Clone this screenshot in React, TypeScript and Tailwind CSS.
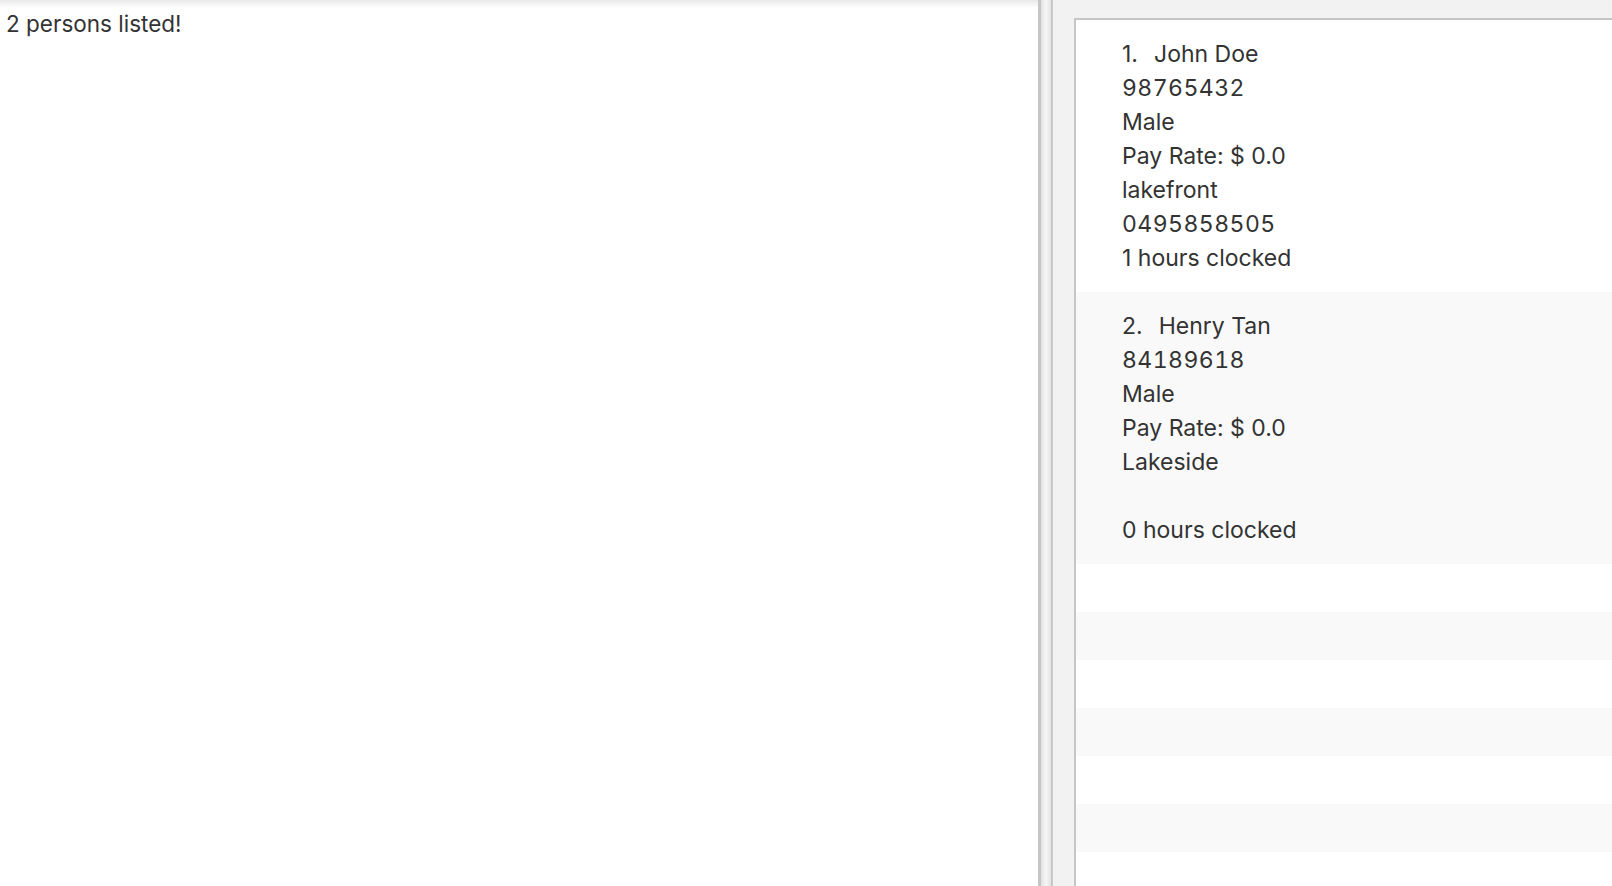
import React from "react";

type Person = {
  name: string;
  phone: string;
  gender: string;
  pay: string;
  address: string;
  extra: string;
  hours: string;
};

const people: Person[] = [
  {
    name: "John Doe",
    phone: "98765432",
    gender: "Male",
    pay: "Pay Rate: $ 0.0",
    address: "lakefront",
    extra: "0495858505",
    hours: "1 hours clocked",
  },
  {
    name: "Henry Tan",
    phone: "84189618",
    gender: "Male",
    pay: "Pay Rate: $ 0.0",
    address: "Lakeside",
    extra: "",
    hours: "0 hours clocked",
  },
];

function Card({ p, i }: { p: Person; i: number }) {
  return (
    <div
      className={`h-[272px] py-[17px] pl-[46px] text-[23px] leading-[34px] text-[#333333] ${
        i % 2 === 0 ? "bg-white" : "bg-[#f9f9f9]"
      }`}
    >
      <div className="flex gap-[16px]">
        <span>{i + 1}.</span>
        <span>{p.name}</span>
      </div>
      <div className="tabular-nums tracking-[0.45px]">{p.phone}</div>
      <div>{p.gender}</div>
      <div>{p.pay}</div>
      <div>{p.address}</div>
      <div className="h-[34px] tabular-nums tracking-[0.45px]">{p.extra}</div>
      <div>{p.hours}</div>
    </div>
  );
}

export default function App() {
  const empties = [0, 1, 2, 3, 4, 5, 6];
  return (
    <div
      className="flex h-[886px] w-[1612px] overflow-hidden"
      style={{ fontFamily: "Inter, 'Noto Sans', sans-serif" }}
    >
      <div className="w-[1038px] shrink-0 bg-[linear-gradient(#e9e9e9,#ffffff_8px)] pl-[6px] pt-[9px] text-[22.5px] leading-[30px] text-[#333333]">
        2 persons listed!
      </div>
      <div className="w-[3px] shrink-0 bg-[#c6c6c6]" />
      <div className="w-[10px] shrink-0 bg-[linear-gradient(to_right,#e2e2e2,#f7f7f7,#e2e2e2)]" />
      <div className="w-[2px] shrink-0 bg-[#c8c8c8]" />
      <div className="flex flex-1 flex-col bg-[#f2f2f2] pl-[21px] pt-[18px]">
        <div className="flex-1 overflow-hidden border-l-2 border-t-2 border-[#c6c6c6] bg-white">
          {people.map((p, i) => (
            <Card key={i} p={p} i={i} />
          ))}
          {empties.map((e) => (
            <div
              key={e}
              className={`h-[48px] ${e % 2 === 0 ? "bg-white" : "bg-[#f9f9f9]"}`}
            />
          ))}
        </div>
      </div>
    </div>
  );
}
